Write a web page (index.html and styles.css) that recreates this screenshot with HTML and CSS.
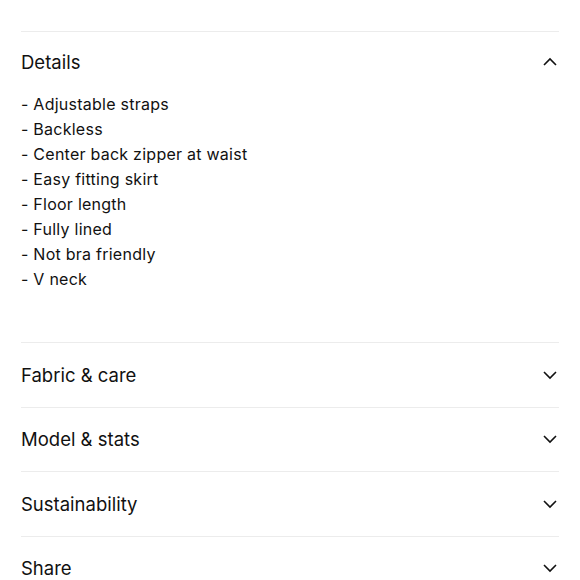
FILE: index.html
```html
<!DOCTYPE html>
<html>
<head>
<meta charset="utf-8">
<link rel="stylesheet" href="styles.css">
</head>
<body>
<div class="accordion">
  <section class="item open">
    <div class="head">
      <span class="title">Details</span>
      <svg class="chev" width="16" height="10" viewBox="0 0 16 10"><path d="M2 8 L8 2 L14 8" fill="none" stroke="#111" stroke-width="1.6"/></svg>
    </div>
    <ul class="list">
      <li>- Adjustable straps</li>
      <li>- Backless</li>
      <li>- Center back zipper at waist</li>
      <li>- Easy fitting skirt</li>
      <li>- Floor length</li>
      <li>- Fully lined</li>
      <li>- Not bra friendly</li>
      <li>- V neck</li>
    </ul>
  </section>
  <section class="item">
    <div class="head">
      <span class="title">Fabric &amp; care</span>
      <svg class="chev" width="16" height="10" viewBox="0 0 16 10"><path d="M2 2 L8 8 L14 2" fill="none" stroke="#111" stroke-width="1.6"/></svg>
    </div>
  </section>
  <section class="item">
    <div class="head">
      <span class="title">Model &amp; stats</span>
      <svg class="chev" width="16" height="10" viewBox="0 0 16 10"><path d="M2 2 L8 8 L14 2" fill="none" stroke="#111" stroke-width="1.6"/></svg>
    </div>
  </section>
  <section class="item">
    <div class="head">
      <span class="title">Sustainability</span>
      <svg class="chev" width="16" height="10" viewBox="0 0 16 10"><path d="M2 2 L8 8 L14 2" fill="none" stroke="#111" stroke-width="1.6"/></svg>
    </div>
  </section>
  <section class="item">
    <div class="head">
      <span class="title">Share</span>
      <svg class="chev" width="16" height="10" viewBox="0 0 16 10"><path d="M2 2 L8 8 L14 2" fill="none" stroke="#111" stroke-width="1.6"/></svg>
    </div>
  </section>
</div>
</body>
</html>
```
FILE: styles.css
```css
html, body {
  margin: 0;
  padding: 0;
  background: #fff;
  overflow: hidden;
}
body {
  font-family: Inter, "Noto Sans", sans-serif;
  color: #111;
}
.accordion {
  padding: 31px 21px 0 21px;
}
.item {
  border-top: 1px solid #ececec;
}
.head {
  height: 63.5px;
  display: flex;
  align-items: center;
  justify-content: space-between;
  padding-right: 1px;
}
.open .head {
  height: 60px;
}
.title {
  font-size: 18.5px;
  letter-spacing: 0;
}
.list {
  list-style: none;
  margin: 0;
  padding: 0 0 50px 0;
  font-size: 16px;
  line-height: 25px;
  letter-spacing: 0.25px;
}
```
